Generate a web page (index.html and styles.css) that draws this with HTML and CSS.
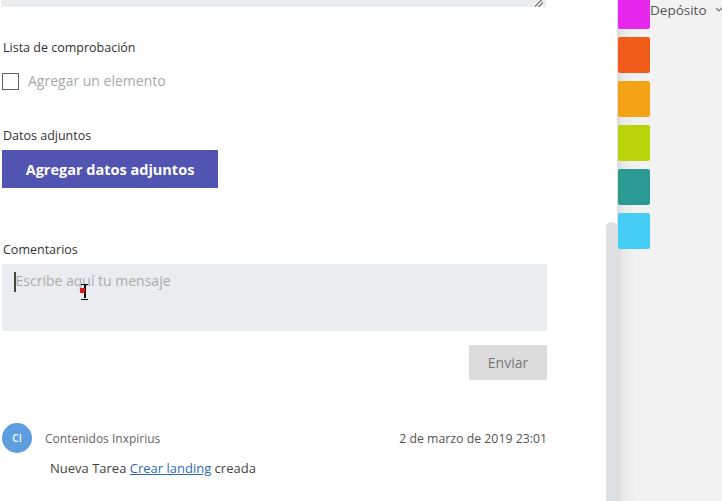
FILE: index.html
```html
<!DOCTYPE html>
<html lang="es">
<head>
<meta charset="utf-8">
<link rel="stylesheet" href="styles.css">
</head>
<body>
<div class="page">
  <div class="main">
    <div class="prev-box"><span class="grip"></span></div>

    <div class="label lbl-check">Lista de comprobación</div>
    <div class="check-row">
      <span class="checkbox"></span>
      <span class="check-ph">Agregar un elemento</span>
    </div>

    <div class="label lbl-attach">Datos adjuntos</div>
    <button class="btn-attach">Agregar datos adjuntos</button>

    <div class="label lbl-comments">Comentarios</div>
    <div class="comment-box">
      <span class="caret"></span><span class="comment-ph">Escribe aquí tu mensaje</span>
      <span class="ibeam"><span class="ibeam-dot"></span></span>
    </div>
    <div class="send-row"><button class="btn-send">Enviar</button></div>

    <div class="activity">
      <div class="act-head">
        <span class="avatar">CI</span>
        <span class="author">Contenidos Inxpirius</span>
        <span class="date">2 de marzo de 2019 23:01</span>
      </div>
      <div class="act-body">Nueva Tarea <a class="link" href="#">Crear landing</a> creada</div>
    </div>
  </div>

  <div class="scrollbar"><div class="thumb"></div></div>

  <div class="side">
    <div class="swatches">
      <span class="sw sw-top c-magenta"></span>
      <span class="sw c-orange"></span>
      <span class="sw c-amber"></span>
      <span class="sw c-lime"></span>
      <span class="sw c-teal"></span>
      <span class="sw c-cyan"></span>
    </div>
    <div class="side-label">
      <span>Depósito</span>
      <svg class="chev" width="8" height="6" viewBox="0 0 8 6"><path d="M1 1 L4 4 L7 1" fill="none" stroke="#777" stroke-width="1.2"/></svg>
    </div>
  </div>
</div>
</body>
</html>
```

FILE: styles.css
```css
* { box-sizing: border-box; }
html, body { margin: 0; padding: 0; background: #fff; }
body {
  font-family: "Segoe UI", "Open Sans", "Noto Sans", "Liberation Sans", sans-serif;
  color: #333;
}
.page {
  display: flex;
  width: 722px;
  height: 501px;
  overflow: hidden;
}
.main {
  width: 606px;
  flex: none;
  padding-left: 2px;
  position: relative;
}
.prev-box {
  width: 545px;
  height: 7px;
  margin-left: -1px;
  background: #eaecee;
  position: relative;
}
.grip {
  position: absolute;
  right: 3px;
  top: 0;
  width: 8px;
  height: 7px;
  background: linear-gradient(135deg, transparent 40%, #888 40%, #888 52%, transparent 52%, transparent 66%, #888 66%, #888 78%, transparent 78%);
}
.label {
  font-size: 12.5px;
  line-height: 18px;
  height: 18px;
  color: #333;
  padding-left: 1px;
}
.lbl-check { margin-top: 32px; }
.check-row {
  display: flex;
  align-items: center;
  gap: 9px;
  margin-top: 15px;
  height: 18px;
}
.checkbox {
  width: 17px;
  height: 17px;
  border: 1.5px solid #606060;
  flex: none;
  background: #fff;
}
.check-ph {
  font-size: 14px;
  color: #a8a8a8;
  line-height: 18px;
}
.lbl-attach { margin-top: 37px; }
.btn-attach {
  display: block;
  margin-top: 5px;
  width: 216px;
  height: 38px;
  border: none;
  background: #5154b0;
  color: #fff;
  font-family: inherit;
  font-weight: 700;
  font-size: 14.5px;
  padding: 0;
  text-align: center;
}
.lbl-comments { margin-top: 53px; }
.comment-box {
  margin-top: 5px;
  width: 545px;
  height: 67px;
  background: #eaecef;
  position: relative;
  padding: 8px 0 0 12px;
  display: flex;
  align-items: flex-start;
}
.caret {
  width: 1.5px;
  height: 20px;
  background: #444;
  flex: none;
}
.comment-ph {
  font-size: 14px;
  color: #a8acb0;
  line-height: 18px;
}
.ibeam {
  position: absolute;
  left: 79px;
  top: 20px;
  width: 7px;
  height: 16px;
  border-top: 1.5px solid #111;
  border-bottom: 1.5px solid #111;
}
.ibeam::before {
  content: "";
  position: absolute;
  left: 3px;
  top: 0;
  width: 1.5px;
  height: 13px;
  background: #111;
}
.ibeam-dot {
  position: absolute;
  left: -1px;
  top: 3px;
  width: 5px;
  height: 5px;
  background: #e0141e;
}
.send-row {
  display: flex;
  justify-content: flex-end;
  width: 545px;
  margin-top: 14px;
}
.btn-send {
  width: 78px;
  height: 35px;
  border: none;
  background: #dcdcdc;
  color: #777;
  font-family: inherit;
  font-size: 14px;
  padding: 0;
}
.activity {
  width: 545px;
  margin-top: 44px;
}
.act-head {
  display: flex;
  align-items: center;
  height: 28px;
}
.avatar {
  width: 30px;
  height: 30px;
  border-radius: 50%;
  background: #5e9ddf;
  color: #fff;
  font-size: 10px;
  font-weight: 600;
  display: flex;
  align-items: center;
  justify-content: center;
  flex: none;
}
.author {
  margin-left: 13px;
  font-size: 12px;
  color: #666;
}
.date {
  margin-left: auto;
  font-size: 12.3px;
  color: #555;
}
.act-body {
  margin-top: 7px;
  padding-left: 48px;
  font-size: 13px;
  color: #444;
  line-height: 18px;
}
.link {
  color: #2b6cb0;
  text-decoration: underline;
}
.scrollbar {
  width: 11px;
  flex: none;
  padding-top: 222px;
  background: #fff;
}
.thumb {
  height: 300px;
  background: #dde1e4;
  border-radius: 5px 5px 0 0;
}
.side {
  flex: 1;
  display: flex;
  background: linear-gradient(90deg, #dcdcdc 0px, #ebebeb 8px, #f2f2f2 20px, #f2f2f2 100%);
  position: relative;
}
.swatches {
  display: flex;
  flex-direction: column;
  gap: 8px;
  padding-left: 1px;
  margin-top: -7px;
}
.sw {
  display: block;
  width: 32px;
  height: 36px;
  border-radius: 2px;
}
.c-magenta { background: #e727ee; }
.c-orange { background: #f25c1a; }
.c-amber { background: #f4a216; }
.c-lime { background: #b9d40b; }
.c-teal { background: #2b9a93; }
.c-cyan { background: #46cdf6; }
.side-label {
  display: flex;
  align-items: center;
  height: 20px;
  margin-left: 0;
  font-size: 13.5px;
  color: #555;
  white-space: nowrap;
}
.chev {
  flex: none;
  margin-left: 8px;
}
```
